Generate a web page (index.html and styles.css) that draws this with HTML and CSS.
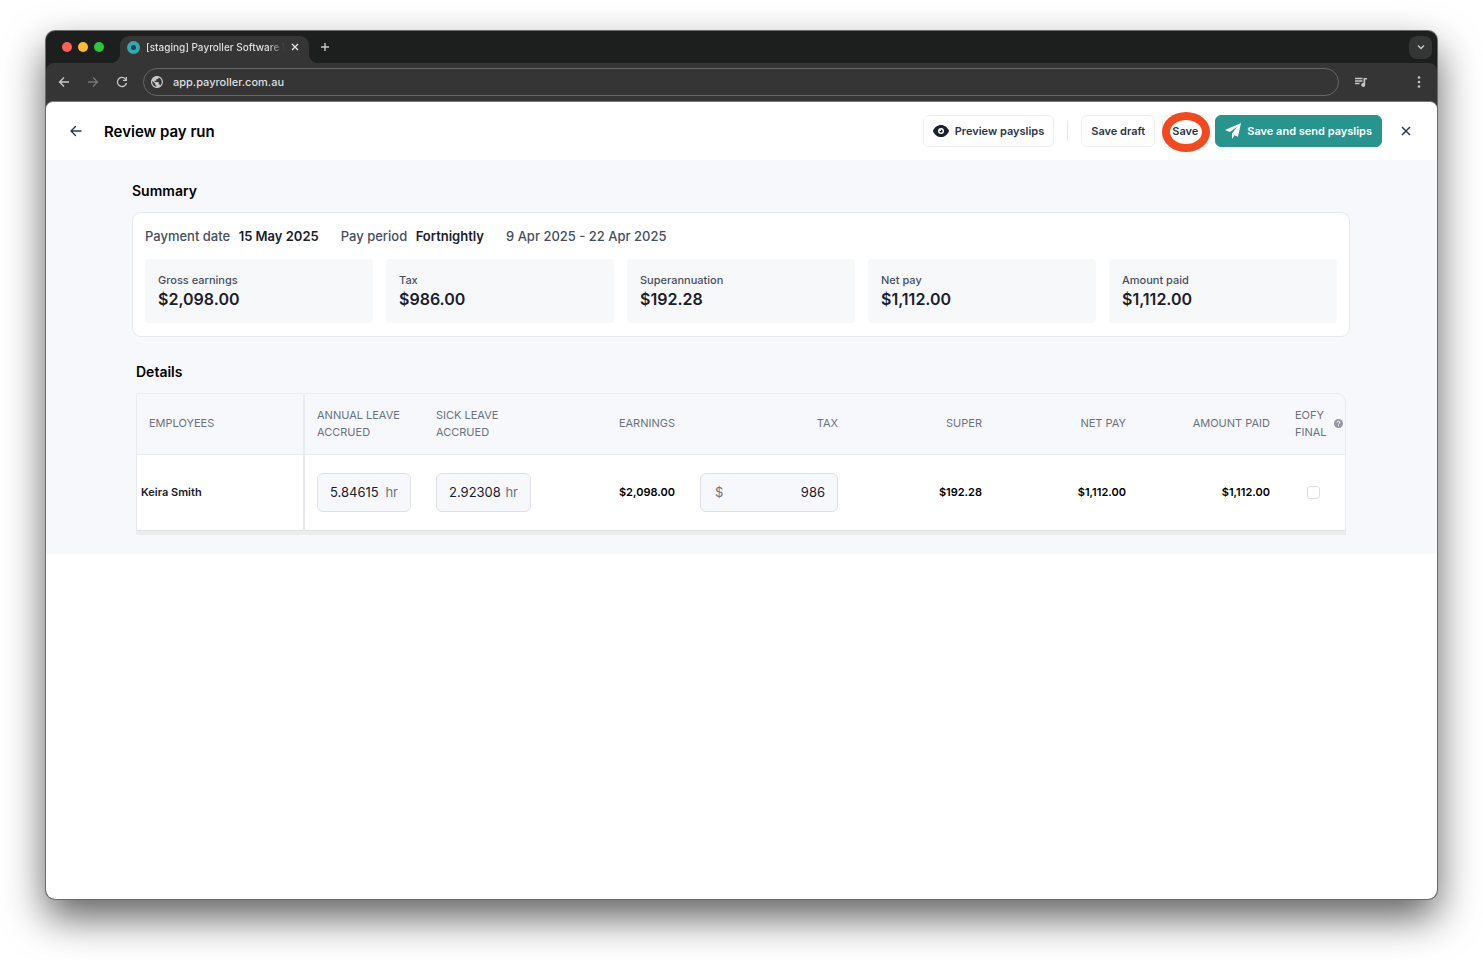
FILE: index.html
```html
<!DOCTYPE html>
<html lang="en">
  <head>
    <meta charset="utf-8">
    <meta name="viewport" content="width=device-width, initial-scale=1">
    <title>Review pay run</title>
    <link rel="stylesheet" href="styles.css">
  </head>
  <body>
    <div class="window">

      <!-- browser tabs -->
      <div class="tab-strip">
        <div class="lights">
          <span class="light red"></span>
          <span class="light yellow"></span>
          <span class="light green"></span>
        </div>
        <div class="tab">
          <span class="favicon"></span>
          <span class="tab-title">[staging] Payroller Software W</span>
          <button class="tab-close" aria-label="Close tab">
            <svg width="8" height="8" viewBox="0 0 8 8"><path d="M1 1l6 6M7 1L1 7" stroke="#e3e3e3" stroke-width="1.4"/></svg>
          </button>
        </div>
        <button class="new-tab" aria-label="New tab">
          <svg width="10" height="10" viewBox="0 0 10 10"><path d="M5 1v8M1 5h8" stroke="#c7c7c7" stroke-width="1.4"/></svg>
        </button>
        <button class="tab-search" aria-label="Search tabs">
          <svg width="8" height="8" viewBox="0 0 8 8"><path d="M1 2.5l3 3 3-3" fill="none" stroke="#c7c7c7" stroke-width="1.4"/></svg>
        </button>
      </div>

      <!-- address bar -->
      <div class="toolbar">
        <button class="nav-btn" aria-label="Back">
          <svg width="12" height="12" viewBox="0 0 12 12"><path d="M11 6H2M6 1.5L1.5 6 6 10.5" fill="none" stroke="#c7c7c7" stroke-width="1.3"/></svg>
        </button>
        <button class="nav-btn" aria-label="Forward">
          <svg width="12" height="12" viewBox="0 0 12 12"><path d="M1 6h9M6 1.5L10.5 6 6 10.5" fill="none" stroke="#757575" stroke-width="1.3"/></svg>
        </button>
        <button class="nav-btn" aria-label="Reload">
          <svg width="12" height="12" viewBox="0 0 12 12"><path d="M10.5 7A4.6 4.6 0 1 1 9.4 2.9L10.3 4" fill="none" stroke="#c7c7c7" stroke-width="1.3"/><path d="M11 1v4H7V3.7h2.7V1z" fill="#c7c7c7"/></svg>
        </button>
        <div class="address">
          <svg width="12" height="12" viewBox="2 2 20 20"><path fill="#c7c7c7" d="M12 2C6.48 2 2 6.48 2 12s4.48 10 10 10 10-4.48 10-10S17.52 2 12 2zm-1 17.93c-3.95-.49-7-3.85-7-7.93 0-.62.08-1.21.21-1.79L9 15v1c0 1.1.9 2 2 2v1.93zm6.9-2.54c-.26-.81-1-1.39-1.9-1.39h-1v-3c0-.55-.45-1-1-1H8v-2h2c.55 0 1-.45 1-1V7h2c1.1 0 2-.9 2-2v-.41c2.93 1.19 5 4.06 5 7.41 0 2.08-.8 3.97-2.1 5.39z"/></svg>
          <input class="address-input" type="text" value="app.payroller.com.au" aria-label="Address">
        </div>
        <button class="nav-btn media" aria-label="Media controls">
          <svg width="14" height="11" viewBox="0 0 14 11"><path d="M1 1.5h7.5M1 4h7.5M1 6.500h4.500" stroke="#c7c7c7" stroke-width="1.4"/><path d="M9.500 1H13v1.600h-1.800V8a2 2 0 1 1-1.700-2z" fill="#c7c7c7"/></svg>
        </button>
        <button class="nav-btn more" aria-label="Menu">
          <svg width="4" height="12" viewBox="0 0 4 12" fill="#c7c7c7"><circle cx="2" cy="1.5" r="1.3"/><circle cx="2" cy="6" r="1.3"/><circle cx="2" cy="10.5" r="1.3"/></svg>
        </button>
      </div>

      <div class="page">
        <header class="page-header">
          <button class="icon-btn" aria-label="Go back">
            <svg width="12" height="12" viewBox="0 0 12 12"><path d="M11 6H2M5.5 1.5L1 6l4.5 4.5" fill="none" stroke="#2d3648" stroke-width="1.4" stroke-linecap="round" stroke-linejoin="round"/></svg>
          </button>
          <h1>Review pay run</h1>
          <div class="actions">
            <button class="btn">
              <svg width="16" height="12" viewBox="0 0 16 12"><path d="M8 0C4.5 0 1.6 2.3.2 5.3a1.6 1.6 0 0 0 0 1.4C1.6 9.7 4.5 12 8 12s6.4-2.300 7.800-5.300a1.600 1.600 0 0 0 0-1.400C14.400 2.300 11.500 0 8 0z" fill="#1a202c"/><circle cx="8" cy="6" r="3" fill="#fff"/><circle cx="8" cy="6" r="1.600" fill="#1a202c"/><circle cx="7.200" cy="5.200" r=".9" fill="#fff"/></svg>
              Preview payslips
            </button>
            <span class="divider"></span>
            <button class="btn">Save draft</button>
            <button class="btn save">Save</button>
            <button class="btn primary">
              <svg width="16" height="16" viewBox="0 0 16 16"><path d="M16 0L0 7l4.700 2.100L12.500 3.500 7 10.200V16l2.500-3.800 3.500 1.600z" fill="#fff"/></svg>
              Save and send payslips
            </button>
          </div>
          <button class="icon-btn" aria-label="Close">
            <svg width="10" height="10" viewBox="0 0 10 10"><path d="M1 1l8 8M9 1L1 9" stroke="#2d3648" stroke-width="1.5"/></svg>
          </button>
        </header>

        <main class="content">
          <h2>Summary</h2>
          <section class="card">
            <div class="period">
              <span>Payment date <strong>15 May 2025</strong></span>
              <span>Pay period <strong>Fortnightly</strong></span>
              <span>9 Apr 2025 - 22 Apr 2025</span>
            </div>
            <dl class="stats">
              <div class="stat"><dt>Gross earnings</dt><dd>$2,098.00</dd></div>
              <div class="stat"><dt>Tax</dt><dd>$986.00</dd></div>
              <div class="stat"><dt>Superannuation</dt><dd>$192.28</dd></div>
              <div class="stat"><dt>Net pay</dt><dd>$1,112.00</dd></div>
              <div class="stat"><dt>Amount paid</dt><dd>$1,112.00</dd></div>
            </dl>
          </section>

          <section class="details">
            <h2>Details</h2>
            <div class="table-wrap">
              <table>
                <colgroup>
                  <col class="col-name">
                  <col class="col-leave">
                  <col class="col-leave">
                  <col class="col-money">
                  <col class="col-tax">
                  <col class="col-money">
                  <col class="col-money">
                  <col class="col-money">
                  <col class="col-final">
                </colgroup>
                <thead>
                  <tr>
                    <th class="name">Employees</th>
                    <th>Annual leave accrued</th>
                    <th>Sick leave accrued</th>
                    <th class="num">Earnings</th>
                    <th class="num">Tax</th>
                    <th class="num">Super</th>
                    <th class="num">Net pay</th>
                    <th class="num">Amount paid</th>
                    <th class="final">
                      <div class="final-head">
                        EOFY final
                        <svg width="9" height="9" viewBox="0 0 9 9"><circle cx="4.500" cy="4.500" r="4.500" fill="#9297a3"/><path d="M3.200 3.500a1.300 1.300 0 1 1 1.800 1.200q-.5.200-.5.700M4.500 6.200v1" fill="none" stroke="#fff" stroke-width="1"/></svg>
                      </div>
                    </th>
                  </tr>
                </thead>
                <tbody>
                  <tr>
                    <td class="name">Keira Smith</td>
                    <td>
                      <label class="field"><input type="text" value="5.84615" aria-label="Annual leave accrued"><span>hr</span></label>
                    </td>
                    <td>
                      <label class="field"><input type="text" value="2.92308" aria-label="Sick leave accrued"><span>hr</span></label>
                    </td>
                    <td class="num">$2,098.00</td>
                    <td>
                      <label class="field tax"><span>$</span><input type="text" value="986" aria-label="Tax"></label>
                    </td>
                    <td class="num">$192.28</td>
                    <td class="num">$1,112.00</td>
                    <td class="num">$1,112.00</td>
                    <td class="final"><input type="checkbox" class="tick" aria-label="EOFY final"></td>
                  </tr>
                </tbody>
              </table>
            </div>
          </section>
        </main>
      </div>
    </div>
  </body>
</html>
```
FILE: styles.css
```css
* {
  margin: 0;
  padding: 0;
  box-sizing: border-box;
}

body {
  display: flex;
  min-height: 100vh;
  padding: 31px 46px 61px 46px;
  background: #fff;
  color: #1a202c;
  font-family: Inter, "Liberation Sans", sans-serif;
  font-size: 13px;
}

button,
input {
  font: inherit;
  color: inherit;
  border: none;
  background: none;
  outline: none;
}

button {
  display: flex;
  align-items: center;
  justify-content: center;
  cursor: pointer;
}

svg {
  display: block;
  flex: none;
}

/* browser window */
.window {
  flex: 1;
  min-width: 0;
  display: flex;
  flex-direction: column;
  overflow: hidden;
  border-radius: 9px;
  background: #1d1f1e;
  box-shadow: 0 0 0 1px #6b6b6b, 0 18px 40px rgba(0, 0, 0, 0.64);
}

.tab-strip {
  display: flex;
  align-items: center;
  height: 32px;
  padding: 0 5px 0 16px;
}

.lights {
  display: flex;
  gap: 6px;
  width: 58px;
}

.light {
  width: 10px;
  height: 10px;
  border-radius: 50%;
}

.red { background: #ff5f57; }
.yellow { background: #febc2e; }
.green { background: #28c840; }

.tab {
  position: relative;
  display: flex;
  align-items: center;
  align-self: flex-end;
  width: 189px;
  height: 27px;
  padding: 0 8px 5px 7px;
  border-radius: 9px 9px 0 0;
  background: #353535;
}

/* curved feet of the tab */
.tab::before,
.tab::after {
  content: "";
  position: absolute;
  bottom: 0;
  width: 9px;
  height: 9px;
}

.tab::before {
  right: 100%;
  background: radial-gradient(circle at 0 0, transparent 9px, #353535 9px);
}

.tab::after {
  left: 100%;
  background: radial-gradient(circle at 100% 0, transparent 9px, #353535 9px);
}

.favicon {
  flex: none;
  width: 13px;
  height: 13px;
  margin-right: 6px;
  border: 4px solid #31a9ad;
  border-radius: 50%;
  background: #1d3f45;
}

.tab-title {
  flex: 1;
  overflow: hidden;
  white-space: nowrap;
  font-size: 10px;
  font-weight: 500;
  line-height: 14px;
  color: #dfdfdf;
  -webkit-mask-image: linear-gradient(to right, #000 88%, transparent);
  mask-image: linear-gradient(to right, #000 88%, transparent);
}

.tab-close {
  width: 12px;
  height: 12px;
  margin-left: 4px;
}

.new-tab {
  width: 16px;
  height: 16px;
  margin-left: 8px;
}

.tab-search {
  width: 23px;
  height: 23px;
  margin-left: auto;
  border-radius: 8px;
  background: #353535;
}

.toolbar {
  display: flex;
  align-items: center;
  gap: 17px;
  height: 45px;
  padding: 0 12px 7px;
  border-radius: 8px 8px 0 0;
  background: #353535;
}

.nav-btn {
  width: 12px;
  height: 28px;
}

.address {
  flex: 1;
  display: flex;
  align-items: center;
  gap: 10px;
  height: 28px;
  margin-left: -2px;
  padding: 0 7px;
  border: 1px solid #666;
  border-radius: 14px;
}

.address-input {
  flex: 1;
  font-size: 11px;
  font-weight: 500;
  color: #dfdfdf;
}

.media { width: 14px; margin-left: -2px; }
.more { margin-left: 28px; }

/* page */
.page {
  flex: 1;
  margin-top: -7px;
  overflow: hidden;
  border-top: 1px solid #777;
  border-radius: 7px 7px 0 0;
  background: #fff;
}

.page-header {
  display: flex;
  align-items: center;
  height: 58px;
  padding: 0 21px 0 20px;
}

h1 {
  margin-left: 18px;
  font-size: 15px;
  font-weight: 600;
  color: #000;
}

.icon-btn {
  width: 20px;
  height: 20px;
}

.actions {
  display: flex;
  align-items: center;
  gap: 7px;
  margin-left: auto;
  margin-right: 14px;
}

.btn {
  gap: 6px;
  height: 32px;
  padding: 0 9px;
  border: 1px solid #ebedf0;
  border-radius: 6px;
  background: #fff;
  font-size: 11px;
  font-weight: 600;
  color: #2d3648;
  white-space: nowrap;
}

.divider {
  width: 1px;
  height: 20px;
  margin: 0 6px;
  background: #e6e8eb;
}

/* red ring around the save button */
.save {
  position: relative;
}

.save::after {
  content: "";
  position: absolute;
  inset: -4px -3px -6px -1px;
  border: 8px solid #f4481e;
  border-radius: 50%;
}

.primary {
  border-color: #27958e;
  background: #27958e;
  color: #fff;
}

.content {
  padding: 20px 87px 19px 86px;
  background: #f7f8fb;
}

h2 {
  font-size: 14px;
  font-weight: 600;
  line-height: 22px;
  color: #000;
}

.card {
  margin-top: 10px;
  padding: 13px 12px;
  border: 1px solid #e6e8eb;
  border-radius: 9px;
  background: #fff;
}

.period {
  display: flex;
  gap: 22px;
  margin-bottom: 13px;
  line-height: 20px;
  font-weight: 500;
  color: #475061;
}

.period strong {
  margin-left: 5px;
  font-weight: 600;
  color: #1a202c;
}

.stats {
  display: grid;
  grid-template-columns: repeat(5, 1fr);
  gap: 13px;
}

.stat {
  padding: 13px;
  border-radius: 4px;
  background: #f7f8fa;
}

.stat dt {
  font-size: 11px;
  line-height: 16px;
  font-weight: 500;
  color: #475061;
}

.stat dd {
  font-size: 16px;
  line-height: 22px;
  font-weight: 600;
}

.details {
  margin-top: 24px;
  padding: 0 4px;
}

.table-wrap {
  margin-top: 10px;
  overflow: hidden;
  border: 1px solid #e9ebee;
  border-bottom: 4px solid #ededed;
  border-radius: 0 9px 0 0;
}

table {
  width: 100%;
  table-layout: fixed;
  border-collapse: collapse;
}

.col-name { width: 167px; }
.col-leave { width: 120px; }
.col-money { width: 144px; }
.col-tax { width: 163px; }
.col-final { width: 62px; }

th {
  height: 60px;
  padding: 0 12px;
  font-size: 11px;
  font-weight: 400;
  line-height: 17px;
  text-align: left;
  text-transform: uppercase;
  color: #6b7280;
}

td {
  height: 76px;
  padding: 0 13px 0 12px;
  border-top: 1px solid #e9ebee;
  border-bottom: 1px solid #dfe0e4;
  background: #fff;
  font-size: 11px;
  font-weight: 600;
  color: #000;
}

.num {
  padding-right: 13px;
  text-align: right;
}

th.name,
td.name {
  border-right: 2px solid #e9ebee;
}

td.name {
  padding-left: 4px;
  color: #1a202c;
}

.field {
  display: flex;
  align-items: center;
  gap: 4px;
  height: 39px;
  padding: 0 12px;
  border: 1px solid #dfe1e6;
  border-radius: 6px;
  background: #f7f8fb;
  font-size: 13px;
  font-weight: 400;
  color: #6b7280;
}

.field input {
  flex: 1;
  min-width: 0;
  width: 0;
  color: #1a202c;
}

.tax {
  padding-left: 14px;
}

.tax input {
  text-align: right;
}

th.final {
  padding: 0 2px 0 12px;
}

.final-head {
  display: flex;
  align-items: center;
  justify-content: space-between;
}

td.final {
  padding: 0 2px 0 0;
  text-align: center;
}

.tick {
  appearance: none;
  width: 13px;
  height: 13px;
  border: 1px solid #dcdfe4;
  border-radius: 3px;
  background: #fff;
  vertical-align: middle;
}

.tick:checked {
  background: #27958e;
}
```
